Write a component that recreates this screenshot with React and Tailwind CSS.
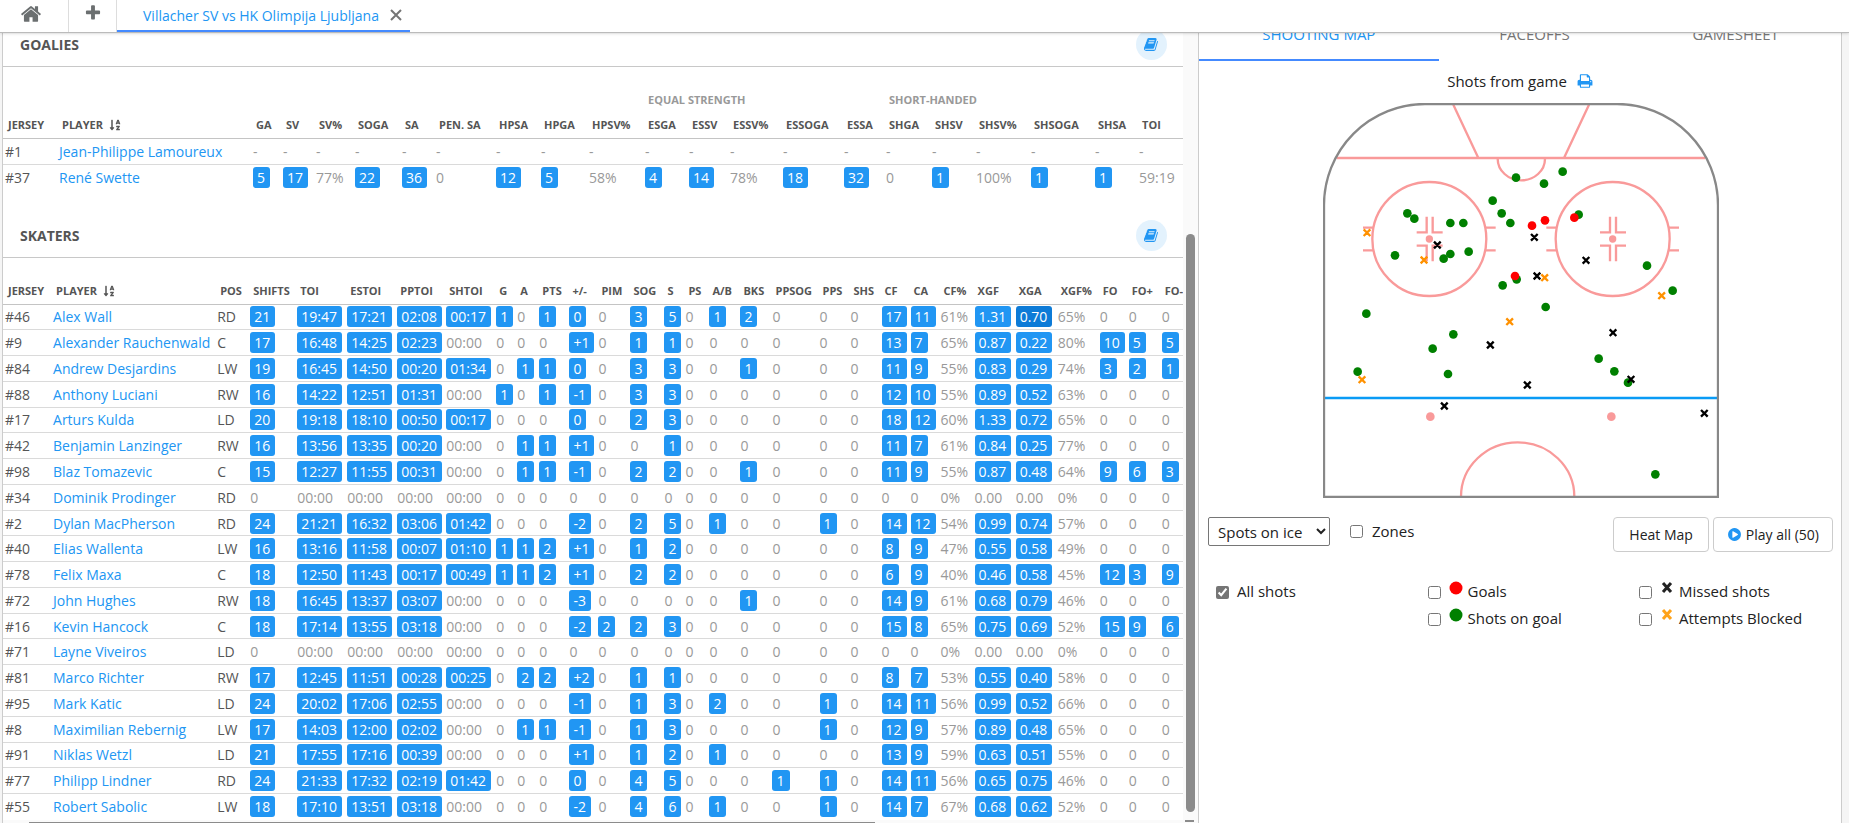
import { FaSortAlphaDown } from 'react-icons/fa';

const ICONS = {
  home: 'M1472 992v480q0 26-19 45t-45 19h-384v-384h-256v384h-384q-26 0-45-19t-19-45v-480q0-1 .5-3t.5-3l575-474 575 474q1 2 1 6zm223-69l-62 74q-8 9-21 11h-3q-13 0-21-7l-692-577-692 577q-12 8-24 7-13-2-21-11l-62-74q-8-10-7-23.5t11-21.5l719-599q32-26 76-26t76 26l244 204v-195q0-14 9-23t23-9h192q14 0 23 9t9 23v408l219 182q10 8 11 21.5t-7 23.5z',
  plus: 'M1600 736v192q0 40-28 68t-68 28h-416v416q0 40-28 68t-68 28h-192q-40 0-68-28t-28-68v-416h-416q-40 0-68-28t-28-68v-192q0-40 28-68t68-28h416v-416q0-40 28-68t68-28h192q40 0 68 28t28 68v416h416q40 0 68 28t28 68z',
  book: 'M1639 478q40 57 18 129l-275 906q-19 64-76.5 107.5t-122.5 43.5h-923q-77 0-148.5-53.5t-99.5-131.5q-24-67-2-127 0-4 3-27t4-37q1-8-3-21.5t-3-19.5q2-11 8-21t16.5-23.5 16.5-23.5q23-38 45-91.5t30-91.5q3-10 .5-30t-.5-28q3-11 17-28t17-23q21-36 42-92t25-90q1-9-2.5-32t.5-28q4-13 22-30.5t22-22.5q19-26 42.5-84.5t27.5-96.5q1-8-3-25.5t-2-26.5q2-8 9-18t18-23 17-21q8-12 16.5-30.5t15-35 16-36 19.5-32 26.5-23.5 36-11.5 47.5 5.5l-1 3q38-9 51-9h761q74 0 114 56t18 130l-274 906q-36 119-71.5 153.5t-128.5 34.5h-869q-27 0-38 15-11 16-1 43 24 70 144 70h923q29 0 56-15.5t35-41.5l300-987q7-22 5-57 38 15 59 43zm-1064 2q-4 13 2 22.5t20 9.5h608q13 0 25.5-9.5t16.5-22.5l21-64q4-13-2-22.5t-20-9.5h-608q-13 0-25.5 9.5t-16.5 22.5zm-83 256q-4 13 2 22.5t20 9.5h608q13 0 25.5-9.5t16.5-22.5l21-64q4-13-2-22.5t-20-9.5h-608q-13 0-25.5 9.5t-16.5 22.5z',
  print: 'M448 1536h896v-256h-896v256zm0-640h896v-384h-160q-40 0-68-28t-28-68v-160h-640v640zm1152 64q0-26-19-45t-45-19-45 19-19 45 19 45 45 19 45-19 19-45zm128 0v416q0 13-9.5 22.5t-22.5 9.5h-224v160q0 40-28 68t-68 28h-960q-40 0-68-28t-28-68v-160h-224q-13 0-22.5-9.5t-9.5-22.5v-416q0-79 56.5-135.5t135.5-56.5h64v-544q0-40 28-68t68-28h672q40 0 88 20t76 48l152 152q28 28 48 76t20 88v256h64q79 0 135.5 56.5t56.5 135.5z',
  play: 'M896 128q209 0 385.5 103t279.5 279.5 103 385.5-103 385.5-279.5 279.5-385.5 103-385.5-103-279.5-279.5-103-385.5 103-385.5 279.5-279.5 385.5-103zm384 823q32-18 32-55t-32-55l-544-320q-31-19-64-1-32 19-32 56v640q0 37 32 56 16 8 32 8 17 0 32-9z',
};

const goalieColumns = [
  { label: 'JERSEY', width: 'w-[54px]' },
  { label: 'PLAYER', width: 'w-[194px]', sorted: true },
  { label: 'GA', width: 'w-[30px]' },
  { label: 'SV', width: 'w-[33px]' },
  { label: 'SV%', width: 'w-[39px]' },
  { label: 'SOGA', width: 'w-[47px]' },
  { label: 'SA', width: 'w-[34px]' },
  { label: 'PEN. SA', width: 'w-[60px]' },
  { label: 'HPSA', width: 'w-[45px]' },
  { label: 'HPGA', width: 'w-[48px]' },
  { label: 'HPSV%', width: 'w-[56px]' },
  { label: 'ESGA', width: 'w-[44px]' },
  { label: 'ESSV', width: 'w-[41px]' },
  { label: 'ESSV%', width: 'w-[53px]' },
  { label: 'ESSOGA', width: 'w-[61px]' },
  { label: 'ESSA', width: 'w-[42px]' },
  { label: 'SHGA', width: 'w-[46px]' },
  { label: 'SHSV', width: 'w-[44px]' },
  { label: 'SHSV%', width: 'w-[55px]' },
  { label: 'SHSOGA', width: 'w-[64px]' },
  { label: 'SHSA', width: 'w-[44px]' },
  { label: 'TOI', width: 'w-[46px]' },
];

const goalieGroups = [
  { label: '', span: 11 },
  { label: 'EQUAL STRENGTH', span: 5 },
  { label: 'SHORT-HANDED', span: 6 },
];

const skaterColumns = [
  { label: 'JERSEY', width: 'w-[48px]' },
  { label: 'PLAYER', width: 'w-[164px]', sorted: true },
  { label: 'POS', width: 'w-[33px]' },
  { label: 'SHIFTS', width: 'w-[47px]' },
  { label: 'TOI', width: 'w-[50px]' },
  { label: 'ESTOI', width: 'w-[50px]' },
  { label: 'PPTOI', width: 'w-[49px]' },
  { label: 'SHTOI', width: 'w-[50px]' },
  { label: 'G', width: 'w-[21px]' },
  { label: 'A', width: 'w-[22px]' },
  { label: 'PTS', width: 'w-[30px]' },
  { label: '+/-', width: 'w-[29px]' },
  { label: 'PIM', width: 'w-[32px]' },
  { label: 'SOG', width: 'w-[34px]' },
  { label: 'S', width: 'w-[21px]' },
  { label: 'PS', width: 'w-[24px]' },
  { label: 'A/B', width: 'w-[31px]' },
  { label: 'BKS', width: 'w-[32px]' },
  { label: 'PPSOG', width: 'w-[47px]' },
  { label: 'PPS', width: 'w-[31px]' },
  { label: 'SHS', width: 'w-[31px]' },
  { label: 'CF', width: 'w-[29px]' },
  { label: 'CA', width: 'w-[30px]' },
  { label: 'CF%', width: 'w-[34px]' },
  { label: 'XGF', width: 'w-[41px]' },
  { label: 'XGA', width: 'w-[42px]' },
  { label: 'XGF%', width: 'w-[42px]' },
  { label: 'FO', width: 'w-[29px]' },
  { label: 'FO+', width: 'w-[33px]' },
  { label: 'FO-', width: 'w-[33px]' },
];

const goalies = [
  { jersey: '#1', name: 'Jean-Philippe Lamoureux', stats: '- - - - - - - - - - - - - - - - - - - -' },
  { jersey: '#37', name: 'René Swette', stats: '5 17 77% 22 36 0 12 5 58% 4 14 78% 18 32 0 1 100% 1 1 59:19', plain: [19] },
];

// stats run in column order, starting at SHIFTS
const skaters = [
  { jersey: '#46', name: 'Alex Wall', pos: 'RD', stats: '21 19:47 17:21 02:08 00:17 1 0 1 =0 0 3 5 0 1 2 0 0 0 17 11 61% 1.31 0.70 65% 0 0 0', active: 22 },
  { jersey: '#9', name: 'Alexander Rauchenwald', pos: 'C', stats: '17 16:48 14:25 02:23 00:00 0 0 0 +1 0 1 1 0 0 0 0 0 0 13 7 65% 0.87 0.22 80% 10 5 5' },
  { jersey: '#84', name: 'Andrew Desjardins', pos: 'LW', stats: '19 16:45 14:50 00:20 01:34 0 1 1 =0 0 3 3 0 0 1 0 0 0 11 9 55% 0.83 0.29 74% 3 2 1' },
  { jersey: '#88', name: 'Anthony Luciani', pos: 'RW', stats: '16 14:22 12:51 01:31 00:00 1 0 1 -1 0 3 3 0 0 0 0 0 0 12 10 55% 0.89 0.52 63% 0 0 0' },
  { jersey: '#17', name: 'Arturs Kulda', pos: 'LD', stats: '20 19:18 18:10 00:50 00:17 0 0 0 =0 0 2 3 0 0 0 0 0 0 18 12 60% 1.33 0.72 65% 0 0 0' },
  { jersey: '#42', name: 'Benjamin Lanzinger', pos: 'RW', stats: '16 13:56 13:35 00:20 00:00 0 1 1 +1 0 0 1 0 0 0 0 0 0 11 7 61% 0.84 0.25 77% 0 0 0' },
  { jersey: '#98', name: 'Blaz Tomazevic', pos: 'C', stats: '15 12:27 11:55 00:31 00:00 0 1 1 -1 0 2 2 0 0 1 0 0 0 11 9 55% 0.87 0.48 64% 9 6 3' },
  { jersey: '#34', name: 'Dominik Prodinger', pos: 'RD', stats: '0 00:00 00:00 00:00 00:00 0 0 0 0 0 0 0 0 0 0 0 0 0 0 0 0% 0.00 0.00 0% 0 0 0' },
  { jersey: '#2', name: 'Dylan MacPherson', pos: 'RD', stats: '24 21:21 16:32 03:06 01:42 0 0 0 -2 0 2 5 0 1 0 0 1 0 14 12 54% 0.99 0.74 57% 0 0 0' },
  { jersey: '#40', name: 'Elias Wallenta', pos: 'LW', stats: '16 13:16 11:58 00:07 01:10 1 1 2 +1 0 1 2 0 0 0 0 0 0 8 9 47% 0.55 0.58 49% 0 0 0' },
  { jersey: '#78', name: 'Felix Maxa', pos: 'C', stats: '18 12:50 11:43 00:17 00:49 1 1 2 +1 0 2 2 0 0 0 0 0 0 6 9 40% 0.46 0.58 45% 12 3 9' },
  { jersey: '#72', name: 'John Hughes', pos: 'RW', stats: '18 16:45 13:37 03:07 00:00 0 0 0 -3 0 0 0 0 0 1 0 0 0 14 9 61% 0.68 0.79 46% 0 0 0' },
  { jersey: '#16', name: 'Kevin Hancock', pos: 'C', stats: '18 17:14 13:55 03:18 00:00 0 0 0 -2 2 2 3 0 0 0 0 0 0 15 8 65% 0.75 0.69 52% 15 9 6' },
  { jersey: '#71', name: 'Layne Viveiros', pos: 'LD', stats: '0 00:00 00:00 00:00 00:00 0 0 0 0 0 0 0 0 0 0 0 0 0 0 0 0% 0.00 0.00 0% 0 0 0' },
  { jersey: '#81', name: 'Marco Richter', pos: 'RW', stats: '17 12:45 11:51 00:28 00:25 0 2 2 +2 0 1 1 0 0 0 0 0 0 8 7 53% 0.55 0.40 58% 0 0 0' },
  { jersey: '#95', name: 'Mark Katic', pos: 'LD', stats: '24 20:02 17:06 02:55 00:00 0 0 0 -1 0 1 3 0 2 0 0 1 0 14 11 56% 0.99 0.52 66% 0 0 0' },
  { jersey: '#8', name: 'Maximilian Rebernig', pos: 'LW', stats: '17 14:03 12:00 02:02 00:00 0 1 1 -1 0 1 3 0 0 0 0 1 0 12 9 57% 0.89 0.48 65% 0 0 0' },
  { jersey: '#91', name: 'Niklas Wetzl', pos: 'LD', stats: '21 17:55 17:16 00:39 00:00 0 0 0 +1 0 1 2 0 1 0 0 0 0 13 9 59% 0.63 0.51 55% 0 0 0' },
  { jersey: '#77', name: 'Philipp Lindner', pos: 'RD', stats: '24 21:33 17:32 02:19 01:42 0 0 0 =0 0 4 5 0 0 0 1 1 0 14 11 56% 0.65 0.75 46% 0 0 0' },
  { jersey: '#55', name: 'Robert Sabolic', pos: 'LW', stats: '18 17:10 13:51 03:18 00:00 0 0 0 -2 0 4 6 0 1 0 0 1 0 14 7 67% 0.68 0.62 52% 0 0 0' },
];

const shots = {
  onGoal: [
    [648, 263], [788, 245], [732, 281], [578, 332], [605, 370], [631, 399], [322, 370], [343, 386],
    [451, 399], [490, 399], [285, 496], [451, 492], [431, 506], [506, 485], [608, 586], [650, 568],
    [836, 374], [1041, 527], [1118, 602], [737, 651], [199, 671], [460, 733], [398, 776], [173, 845],
    [444, 852], [896, 806], [943, 844], [984, 878], [1066, 1153],
  ],
  goals: [[696, 407], [735, 391], [823, 383], [645, 558]],
  missed: [
    [412, 465], [703, 442], [858, 511], [711, 558], [939, 728],
    [571, 765], [682, 885], [993, 868], [433, 948], [1213, 970],
  ],
  blocked: [[201, 428], [372, 510], [734, 563], [1085, 617], [629, 695], [186, 869]],
};

function Icon({ name, className }) {
  return (
    <svg viewBox="0 0 1792 1792" fill="currentColor" aria-hidden="true" className={className}>
      <path d={ICONS[name]} />
    </svg>
  );
}

// A zero, a percentage or a missing value has no clips behind it and stays plain.
// "=0" is a zero that can still be opened (an even plus/minus).
function Stat({ value, plain, active }) {
  const isPlain = plain || value.includes('%') || ['0', '00:00', '0.00', '-'].includes(value);
  if (isPlain) return <span className="text-[#999]">{value}</span>;
  return (
    <button
      type="button"
      className={`block h-[21px] rounded-[3px] pl-1 pr-[5px] leading-[21px] text-white ${active ? 'bg-[#0d7bd7]' : 'bg-[#2196f3]'}`}
    >
      {value.replace('=', '')}
    </button>
  );
}

function HeaderRow({ columns }) {
  return (
    <tr className="h-[26px] border-b border-[#c4c4c4]">
      {columns.map((col) => (
        <th key={col.label} scope="col" className="pl-[5px] text-left text-[11px] leading-4 font-bold whitespace-nowrap text-[#555]">
          {col.label}
          {col.sorted && <FaSortAlphaDown className="ml-1.5 inline size-3 align-[-2px]" />}
        </th>
      ))}
    </tr>
  );
}

function Columns({ columns }) {
  return (
    <colgroup>
      {columns.map((col) => (
        <col key={col.label} className={col.width} />
      ))}
    </colgroup>
  );
}

function PlayerRow({ player }) {
  return (
    <tr className="border-b border-[#dadada] whitespace-nowrap last:border-b-0">
      <td className="pl-0.5">{player.jersey}</td>
      <td className="pl-0.5">
        <a href="#player" className="text-[#2196f3]">{player.name}</a>
      </td>
      {player.pos && <td className="pl-0.5">{player.pos}</td>}
      {player.stats.split(' ').map((value, i) => (
        <td key={i} className="pl-0.5">
          <Stat value={value} plain={player.plain?.includes(i)} active={player.active === i} />
        </td>
      ))}
    </tr>
  );
}

function SectionTitle({ title }) {
  return (
    <div className="flex h-11 items-center justify-between border-b border-[#c8c8c8] pr-4 pl-[17px]">
      <h2 className="text-[14px] font-bold text-[#555]">{title}</h2>
      <button type="button" aria-label={`${title} glossary`} className="grid size-[31px] place-items-center rounded-full bg-[#e3f2fd] text-[#2196f3]">
        <Icon name="book" className="size-[15px]" />
      </button>
    </div>
  );
}

function TopBar() {
  return (
    <header className="z-10 flex h-[33px] shrink-0 border-b border-[#bbb] bg-white text-[#6b6f70] shadow-sm">
      <button type="button" aria-label="Home" className="grid w-[69px] place-items-center border-r border-[#ddd] pr-1.5 pb-1">
        <Icon name="home" className="size-[22px]" />
      </button>
      <button type="button" aria-label="New tab" className="grid w-12 place-items-center border-r border-[#ddd] pb-1.5">
        <Icon name="plus" className="size-[18px]" />
      </button>
      <div className="flex h-8 items-center gap-[11px] border-b-2 border-[#448aff] pr-2 pl-[26px]">
        <a href="#game" className="text-[14px] text-[#2196f3]">Villacher SV vs HK Olimpija Ljubljana</a>
        <button type="button" aria-label="Close tab">
          <svg viewBox="0 0 12 12" className="size-3 stroke-[#757575] stroke-2" aria-hidden="true">
            <path d="M1 1l10 10M11 1L1 11" />
          </svg>
        </button>
      </div>
    </header>
  );
}

function StatsPane() {
  return (
    <section className="flex min-h-0 min-w-0 flex-col border-l border-[#ccc] bg-white">
      <div className="flex min-h-0 flex-1">
        <div className="min-w-0 flex-1 overflow-hidden">
          <div className="-mt-2.5">
            <SectionTitle title="GOALIES" />
          </div>
          <table className="mt-5 h-[103px] w-full table-fixed border-collapse text-[14px] leading-[21px] text-[#555]">
            <Columns columns={goalieColumns} />
            <thead>
              <tr className="h-[25px]">
                {goalieGroups.map((group) => (
                  <th key={group.label} colSpan={group.span} className="pl-[5px] text-left text-[11px] leading-4 font-bold text-[#999]">
                    {group.label}
                  </th>
                ))}
              </tr>
              <HeaderRow columns={goalieColumns} />
            </thead>
            <tbody>
              {goalies.map((player) => (
                <PlayerRow key={player.jersey} player={player} />
              ))}
            </tbody>
          </table>
          <div className="mt-6">
            <SectionTitle title="SKATERS" />
          </div>
          <table className="mt-5 h-[541px] w-[1190px] table-fixed border-collapse text-[14px] leading-[21px] text-[#555]">
            <Columns columns={skaterColumns} />
            <thead>
              <HeaderRow columns={skaterColumns} />
            </thead>
            <tbody>
              {skaters.map((player) => (
                <PlayerRow key={player.jersey} player={player} />
              ))}
            </tbody>
          </table>
        </div>
        <div className="flex w-[15px] shrink-0 flex-col justify-end bg-[#fafafa] pr-[3px] pl-[3px]">
          <div className="mb-2 h-[578px] rounded-full bg-[#8b8b8b]" />
        </div>
      </div>
      <div className="flex h-[3px] items-end justify-between bg-[#fafafa] pr-1">
        <div className="ml-[26px] h-px w-[71%] bg-[#8b8b8b]" />
        <div className="mb-px h-0.5 w-[9px] bg-[#8b8b8b]" />
      </div>
    </section>
  );
}

function FaceoffCircle({ cx }) {
  return (
    <g>
      <circle cx={cx} cy="447" r="171" />
      <path d={`M${cx - 199} 413h30M${cx - 199} 481h30M${cx + 169} 413h30M${cx + 169} 481h30`} />
      <path d={`M${cx - 8} 380v47h-30M${cx + 10} 380v47h30M${cx - 8} 514v-47h-30M${cx + 10} 514v-47h30`} />
      <circle cx={cx} cy="447" r="11" fill="#f99a9a" stroke="none" />
    </g>
  );
}

function Rink() {
  const cross = ([x, y]) => `M${x - 10} ${y - 10}l20 20M${x + 10} ${y - 10}l-20 20`;
  return (
    <svg viewBox="69 39 1188 1185" className="mx-auto w-[398px] pl-0.5" role="img" aria-label="Shots from game">
      <g fill="none" stroke="#f99a9a" strokeWidth="7">
        <path d="M110 204H1216M460 44l74 158M867 44l-74 158M593 206A71 65 0 0 0 735 206" />
        <FaceoffCircle cx={388} />
        <FaceoffCircle cx={938} />
        <path d="M483 1220A170 163 0 0 1 823 1220" />
      </g>
      <g fill="#f99a9a">
        <circle cx="391" cy="980" r="13" />
        <circle cx="934" cy="980" r="13" />
      </g>
      <path d="M75 924H1251" stroke="#0a9bf5" strokeWidth="8" />
      <path d="M72 1221V345A303 303 0 0 1 375 42H951A303 303 0 0 1 1254 345V1221Z" fill="none" stroke="#888" strokeWidth="7" />
      {shots.onGoal.map(([x, y]) => (
        <circle key={`${x}-${y}`} cx={x} cy={y} r="13" fill="green" />
      ))}
      {shots.goals.map(([x, y]) => (
        <circle key={`${x}-${y}`} cx={x} cy={y} r="13" fill="red" />
      ))}
      <path d={shots.missed.map(cross).join('')} stroke="#000" strokeWidth="7" />
      <path d={shots.blocked.map(cross).join('')} stroke="#ff9100" strokeWidth="7" />
    </svg>
  );
}

function Mark({ type }) {
  const dot = { goal: 'fill-[red]', onGoal: 'fill-[green]' }[type];
  const cross = { missed: 'stroke-[#222]', blocked: 'stroke-[#ffa31a]' }[type];
  return (
    <svg viewBox="0 0 14 14" className="mr-[5px] size-3.5 self-start" aria-hidden="true">
      {dot && <circle cx="7" cy="7" r="6.5" className={dot} />}
      {cross && <path d="M3 2l8 9M11 2l-8 9" strokeWidth="3" className={cross} />}
    </svg>
  );
}

function LegendItem({ label, type, checked }) {
  return (
    <label className="flex h-[21px] items-center">
      <input type="checkbox" defaultChecked={checked} className="mt-0.5 mr-2 size-[13px] accent-[#757575]" />
      {type && <Mark type={type} />}
      <span>{label}</span>
    </label>
  );
}

function MapPane() {
  const tabs = ['SHOOTING MAP', 'FACEOFFS', 'GAMESHEET'];
  return (
    <section className="min-h-0 min-w-0 border-l border-[#ccc] bg-[#f5f5f5] pr-[7px]">
      <div className="h-full overflow-hidden border-r border-[#ccc] bg-white text-[15px] text-[#222]">
        <nav className="-mt-7 grid grid-cols-[240fr_192fr_211fr]">
          {tabs.map((tab, i) => (
            <a
              key={tab}
              href="#tab"
              className={`h-14 border-b-2 pt-[17px] text-center leading-6 ${i === 0 ? 'border-[#448aff] text-[#2196f3]' : 'border-transparent text-[#777]'}`}
            >
              {tab}
            </a>
          ))}
        </nav>
        <div className="mt-2 mb-2.5 flex h-6 items-center justify-center gap-2.5">
          <h3>Shots from game</h3>
          <button type="button" aria-label="Print" className="text-[#2196f3]">
            <Icon name="print" className="size-4" />
          </button>
        </div>
        <Rink />
        <div className="mt-[19px] flex items-start pr-2 pl-[9px]">
          <select aria-label="Map type" defaultValue="spots" className="h-[29px] w-[122px] rounded-[2px] border border-[#767676] bg-white pl-[5px]">
            <option value="spots">Spots on ice</option>
            <option value="zones">Zones</option>
          </select>
          <label className="ml-5 flex h-[29px] items-center gap-[9px]">
            <input type="checkbox" className="size-[13px]" />
            Zones
          </label>
          <div className="ml-auto flex gap-1 text-[14px]">
            <button type="button" className="h-[35px] rounded border border-[#ccc] px-[15px]">Heat Map</button>
            <button type="button" className="flex h-[35px] items-center gap-1 rounded border border-[#ccc] px-[13px]">
              <Icon name="play" className="size-[15px] text-[#2196f3]" />
              Play all (50)
            </button>
          </div>
        </div>
        <div className="mt-[29px] grid grid-cols-[1fr_1fr_202px] gap-y-1.5 pl-[17px]">
          <LegendItem label="All shots" checked />
          <LegendItem label="Goals" type="goal" />
          <LegendItem label="Missed shots" type="missed" />
          <div />
          <LegendItem label="Shots on goal" type="onGoal" />
          <LegendItem label="Attempts Blocked" type="blocked" />
        </div>
      </div>
    </section>
  );
}

export default function App() {
  return (
    <div className="flex h-screen flex-col overflow-hidden bg-[#f5f5f5] font-['Open_Sans','Noto_Sans',sans-serif]">
      <TopBar />
      <main className="grid min-h-0 flex-1 grid-cols-[1196fr_651fr] pl-0.5">
        <StatsPane />
        <MapPane />
      </main>
    </div>
  );
}
